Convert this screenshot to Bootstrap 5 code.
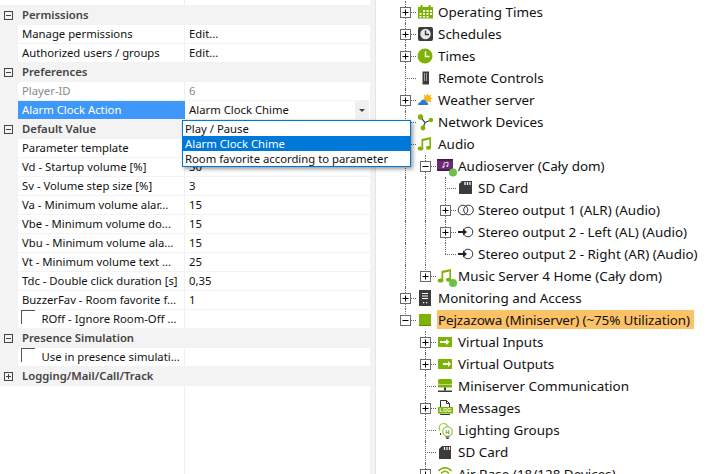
<!DOCTYPE html>
<html lang="en">
<head>
<meta charset="utf-8">
<title>Config</title>
<link rel="stylesheet" href="https://cdn.jsdelivr.net/npm/bootstrap@5.3.0/dist/css/bootstrap.min.css">
<style>
html,body{height:100%;}
body{background:#fff;overflow:hidden;font-family:"Noto Sans","Open Sans",sans-serif;color:#111;}
.shell{width:724px;height:474px;overflow:hidden;}
.prop-pane{width:370px;font-size:11.3px;line-height:18px;}
.split-bar{width:6px;background:#f3f3f3;border-right:1px solid #e4e4e4;}
.tree-pane{padding-top:1px;padding-left:19px;font-size:13.45px;line-height:22px;color:#111;overflow:hidden;}
.pg-top{height:5px;margin-left:18px;}
.pg-row{height:19px;border-bottom:1px solid #f3f3f3;background:#fff;}
.pg-last{height:18px;border-bottom:0;}
.pg-gut{width:18px;background:#f3f3f3;flex:none;}
.pg-name{width:167px;flex:none;padding-left:4px;border-right:1px solid #f0f0f0;white-space:nowrap;overflow:hidden;}
.pg-val{padding-left:4px;white-space:nowrap;}
.pg-band{height:20px;background:#f3f3f3;color:#444;font-weight:600;line-height:20px;padding-left:4px;}
.pg-band svg{width:9px;height:9px;margin-right:9px;flex:none;}
.pg-off{color:#8a8a8a;}
.pg-sel .pg-name{background:#3f97f9;color:#fff;border-right-color:#3f97f9;}
.pg-fill{margin-left:184px;border-left:1px solid #f0f0f0;}
.pg-fill-top{height:5px;}
.cb-box{width:14px;height:14px;margin:0 7px 0 2.5px;border-top:1px solid #555;border-left:1px solid #555;flex:none;}
.pg-name-cb{padding-left:0;}
.drop-btn{width:14px;height:18px;background:#f0f0f0;margin-left:auto;margin-right:1px;}
.drop-tri{width:0;height:0;border-left:3px solid transparent;border-right:3px solid transparent;border-top:3px solid #444;}
.combo-list{left:182px;top:120px;width:229px;min-width:0;padding:0;margin:0;border:1px solid #0078d7;border-radius:0;font-size:11.3px;box-shadow:2px 2px 4px rgba(0,0,0,.4);}
.combo-item{padding:0 0 0 2px;height:15px;line-height:15px;color:#111;font-size:11.3px;}
.combo-item.active{background:#0078d7;color:#fff;}
.tr-row{height:22px;white-space:nowrap;}
.tc{width:20px;height:22px;flex:none;position:relative;}
.tc-v::before,.tc-t::before{content:"";position:absolute;left:10px;top:0;bottom:0;border-left:1px dotted #666;}
.tc-l::before{content:"";position:absolute;left:10px;top:0;height:11px;border-left:1px dotted #666;}
.tc-t::after,.tc-l::after{content:"";position:absolute;left:10px;width:11px;top:11px;border-top:1px dotted #666;}
.exp{position:absolute;left:5px;top:6px;width:11px;height:11px;z-index:1;background:#fff;}
.ico-box{width:23px;height:22px;flex:none;position:relative;}
.ico{position:absolute;left:2px;top:1px;width:20px;height:20px;overflow:visible;z-index:2;}
.tr-hi{background:#fdc168;margin-left:-1px;padding-left:1px;padding-right:4px;height:19px;line-height:20px;margin-top:1px;letter-spacing:-.12px;}
.g{fill:#7cb305;}
.d{fill:#3c3c3c;}
</style>
</head>
<body>
<svg class="d-none" aria-hidden="true">
 <symbol id="p-plus" viewBox="0 0 11 11"><rect x=".5" y=".5" width="10" height="10" fill="#fff" stroke="#6a6a6a"/><path d="M2.5 5.5h6M5.5 2.5v6" stroke="#000" fill="none"/></symbol>
 <symbol id="p-minus" viewBox="0 0 11 11"><rect x=".5" y=".5" width="10" height="10" fill="#fff" stroke="#6a6a6a"/><path d="M2.5 5.5h6" stroke="#000" fill="none"/></symbol>
 <symbol id="b-plus" viewBox="0 0 9 9"><rect x=".5" y=".5" width="8" height="8" fill="none" stroke="#444"/><path d="M2 4.5h5M4.5 2v5" stroke="#444" fill="none"/></symbol>
 <symbol id="b-minus" viewBox="0 0 9 9"><rect x=".5" y=".5" width="8" height="8" fill="none" stroke="#444"/><path d="M2 4.5h5" stroke="#444" fill="none"/></symbol>
 <symbol id="i-note" viewBox="0 0 20 20"><path class="g" d="M4.500 5 14 3v10.500h-1.600V5.600L6.200 6.900V14.500H4.500z"/><ellipse class="g" cx="3.500" cy="14.500" rx="2.800" ry="2"/><ellipse class="g" cx="11.500" cy="13.800" rx="2.600" ry="2"/></symbol>
 <symbol id="i-sd" viewBox="0 0 20 20"><path class="d" d="M5 3h10v13H2V6z"/><path d="M8 4v3M10.500 4v3M13 4v3" stroke="#fff" stroke-width="1.300"/></symbol>
 <symbol id="i-out" viewBox="0 0 20 20"><circle cx="11" cy="10" r="4.800" fill="#fff" stroke="#333"/><path d="M1 10h6" stroke="#222" stroke-width="2"/><path d="M6 6.500 10 10l-4 3.500z" fill="#222"/></symbol>
 <symbol id="i-tag" viewBox="0 0 20 20"><rect class="g" x="1" y="5" width="14" height="10"/></symbol>
</svg>

<div class="shell d-flex">
 <div class="prop-pane position-relative d-flex flex-column flex-none">
  <div class="pg-top d-flex"><div class="pg-fill-top pg-name"></div></div>
  <div class="pg-band d-flex align-items-center"><svg><use href="#b-minus"/></svg>Permissions</div>
  <div class="pg-row d-flex"><div class="pg-gut"></div><div class="pg-name">Manage permissions</div><div class="pg-val">Edit...</div></div>
  <div class="pg-row pg-last d-flex"><div class="pg-gut"></div><div class="pg-name">Authorized users / groups</div><div class="pg-val">Edit...</div></div>
  <div class="pg-band d-flex align-items-center"><svg><use href="#b-minus"/></svg>Preferences</div>
  <div class="pg-row d-flex pg-off"><div class="pg-gut"></div><div class="pg-name">Player-ID</div><div class="pg-val">6</div></div>
  <div class="pg-row pg-last d-flex pg-sel"><div class="pg-gut"></div><div class="pg-name">Alarm Clock Action</div><div class="pg-val">Alarm Clock Chime</div><div class="drop-btn d-flex align-items-center justify-content-center"><div class="drop-tri"></div></div></div>
  <div class="pg-band d-flex align-items-center"><svg><use href="#b-minus"/></svg>Default Value</div>
  <div class="pg-row d-flex"><div class="pg-gut"></div><div class="pg-name">Parameter template</div><div class="pg-val"></div></div>
  <div class="pg-row d-flex"><div class="pg-gut"></div><div class="pg-name">Vd - Startup volume [%]</div><div class="pg-val">30</div></div>
  <div class="pg-row d-flex"><div class="pg-gut"></div><div class="pg-name">Sv - Volume step size [%]</div><div class="pg-val">3</div></div>
  <div class="pg-row d-flex"><div class="pg-gut"></div><div class="pg-name">Va - Minimum volume alar...</div><div class="pg-val">15</div></div>
  <div class="pg-row d-flex"><div class="pg-gut"></div><div class="pg-name">Vbe - Minimum volume do...</div><div class="pg-val">15</div></div>
  <div class="pg-row d-flex"><div class="pg-gut"></div><div class="pg-name">Vbu - Minimum volume ala...</div><div class="pg-val">15</div></div>
  <div class="pg-row d-flex"><div class="pg-gut"></div><div class="pg-name">Vt - Minimum volume text ...</div><div class="pg-val">25</div></div>
  <div class="pg-row d-flex"><div class="pg-gut"></div><div class="pg-name">Tdc - Double click duration [s]</div><div class="pg-val">0,35</div></div>
  <div class="pg-row d-flex"><div class="pg-gut"></div><div class="pg-name">BuzzerFav - Room favorite f...</div><div class="pg-val">1</div></div>
  <div class="pg-row pg-last d-flex"><div class="pg-gut"></div><div class="pg-name pg-name-cb d-flex"><span class="cb-box"></span>ROff - Ignore Room-Off ...</div><div class="pg-val"></div></div>
  <div class="pg-band d-flex align-items-center"><svg><use href="#b-minus"/></svg>Presence Simulation</div>
  <div class="pg-row pg-last d-flex"><div class="pg-gut"></div><div class="pg-name pg-name-cb d-flex"><span class="cb-box"></span>Use in presence simulati...</div><div class="pg-val"></div></div>
  <div class="pg-band d-flex align-items-center"><svg><use href="#b-plus"/></svg>Logging/Mail/Call/Track</div>
  <div class="pg-fill flex-grow-1"></div>

  <ul class="dropdown-menu show combo-list position-absolute list-unstyled">
   <li class="dropdown-item combo-item">Play / Pause</li>
   <li class="dropdown-item combo-item active">Alarm Clock Chime</li>
   <li class="dropdown-item combo-item">Room favorite according to parameter</li>
  </ul>
 </div>
 <div class="split-bar flex-none"></div>
 <div class="tree-pane flex-grow-1 d-flex flex-column">

  <div class="tr-row d-flex"><div class="tc tc-t"><svg class="exp"><use href="#p-plus"/></svg></div><div class="ico-box"><svg class="ico" viewBox="0 0 20 20"><rect class="g" x="1" y="5" width="15" height="11.500"/><rect class="g" x="3.500" y="3" width="2" height="3"/><rect class="g" x="11.500" y="3" width="2" height="3"/><path d="M6 8h2v2H6zM9.500 8h2v2h-2zM13 8h2v2h-2zM2.500 11h2v2h-2zM6 11h2v2H6zM9.500 11h2v2h-2zM13 11h2v2h-2zM2.500 14h2v1.500h-2zM6 14h2v1.500H6zM9.500 14h2v1.500h-2z" fill="#fff"/></svg></div><span>Operating Times</span></div>

  <div class="tr-row d-flex"><div class="tc tc-t"><svg class="exp"><use href="#p-plus"/></svg></div><div class="ico-box"><svg class="ico" viewBox="0 0 20 20"><rect class="d" x="1" y="3" width="15" height="14" rx="2"/><circle cx="8.500" cy="10" r="5.200" fill="#e8e8e8"/><path d="M8.500 6.500V10.500H12" stroke="#333" stroke-width="1.300" fill="none"/></svg></div><span>Schedules</span></div>

  <div class="tr-row d-flex"><div class="tc tc-t"><svg class="exp"><use href="#p-plus"/></svg></div><div class="ico-box"><svg class="ico" viewBox="0 0 20 20"><circle class="g" cx="8" cy="10" r="7.500"/><path d="M8.500 5.500V10.500H12.500" stroke="#fff" stroke-width="1.500" fill="none"/></svg></div><span>Times</span></div>

  <div class="tr-row d-flex"><div class="tc tc-t"></div><div class="ico-box"><svg class="ico" viewBox="0 0 20 20"><rect class="d" x="5.500" y="3.500" width="6.500" height="13"/><path d="M7 5.500h1v1H7zM9 5.500h1v1H9zM7 7.500h1v1H7zM9 7.500h1v1H9zM7 9.500h1v1H7zM9 9.500h1v1H9zM7 11.500h1v1H7zM9 11.500h1v1H9z" fill="#fff"/></svg></div><span>Remote Controls</span></div>

  <div class="tr-row d-flex"><div class="tc tc-t"><svg class="exp"><use href="#p-plus"/></svg></div><div class="ico-box"><svg class="ico" viewBox="0 0 20 20"><circle cx="10.500" cy="8.500" r="3.500" fill="#f6b91d"/><path d="M10.500 3.500v1.500M15.500 8.500H14M14 5l-1 1M7 5l1 1M14 12l-1-1" stroke="#f6b91d" stroke-width="1.100"/><path d="M1 15c0-2 1.300-3 2.500-3 .5-1.800 1.800-2.800 3.300-2.500 1.500.3 2.200 1.500 2.400 2.500 1 0 2 .8 2 3z" fill="#2d7cc7"/></svg></div><span>Weather server</span></div>

  <div class="tr-row d-flex"><div class="tc tc-t"></div><div class="ico-box"><svg class="ico" viewBox="0 0 20 20"><path d="M3.500 5 8 10.500l-2 5.500M14 8l-6 2.500" stroke="#444" stroke-width="1.200" fill="none"/><circle class="g" cx="3.500" cy="5" r="2.700"/><circle class="g" cx="14" cy="8" r="2.200"/><circle class="g" cx="6" cy="16" r="2.400"/></svg></div><span>Network Devices</span></div>

  <div class="tr-row d-flex"><div class="tc tc-t"></div><div class="ico-box"><svg class="ico"><use href="#i-note"/></svg></div><span>Audio</span></div>

  <div class="tr-row d-flex"><div class="tc tc-v"></div><div class="tc tc-t"><svg class="exp"><use href="#p-minus"/></svg></div><div class="ico-box"><svg class="ico" viewBox="0 0 20 20"><rect x="0" y="3" width="16" height="12" fill="#6b2b72"/><rect x="0" y="3" width="16" height="1.500" fill="#3f1644"/><rect x="0" y="13.500" width="16" height="1.500" fill="#3f1644"/><path d="M7 11V7l4-.8V10" stroke="#e8d8ea" fill="none"/><circle cx="6.200" cy="11" r="1" fill="#e8d8ea"/><circle cx="10.200" cy="10" r="1" fill="#e8d8ea"/><circle cx="16" cy="16.500" r="4" fill="#6cc04a"/></svg></div><span>Audioserver (Cały dom)</span></div>

  <div class="tr-row d-flex"><div class="tc tc-v"></div><div class="tc tc-v"></div><div class="tc tc-t"></div><div class="ico-box"><svg class="ico"><use href="#i-sd"/></svg></div><span>SD Card</span></div>

  <div class="tr-row d-flex"><div class="tc tc-v"></div><div class="tc tc-v"></div><div class="tc tc-t"><svg class="exp"><use href="#p-plus"/></svg></div><div class="ico-box"><svg class="ico" viewBox="0 0 20 20"><circle cx="6" cy="10" r="4.800" fill="none" stroke="#333"/><circle cx="11.500" cy="10" r="4.800" fill="none" stroke="#333"/></svg></div><span>Stereo output 1 (ALR) (Audio)</span></div>

  <div class="tr-row d-flex"><div class="tc tc-v"></div><div class="tc tc-v"></div><div class="tc tc-t"><svg class="exp"><use href="#p-plus"/></svg></div><div class="ico-box"><svg class="ico"><use href="#i-out"/></svg></div><span>Stereo output 2 - Left (AL) (Audio)</span></div>

  <div class="tr-row d-flex"><div class="tc tc-v"></div><div class="tc tc-v"></div><div class="tc tc-l"></div><div class="ico-box"><svg class="ico"><use href="#i-out"/></svg></div><span>Stereo output 2 - Right (AR) (Audio)</span></div>

  <div class="tr-row d-flex"><div class="tc tc-v"></div><div class="tc tc-l"><svg class="exp"><use href="#p-plus"/></svg></div><div class="ico-box"><svg class="ico" viewBox="0 0 20 20"><use href="#i-note"/><circle cx="16" cy="17" r="4" fill="#6cc04a"/></svg></div><span>Music Server 4 Home (Cały dom)</span></div>

  <div class="tr-row d-flex"><div class="tc tc-t"><svg class="exp"><use href="#p-plus"/></svg></div><div class="ico-box"><svg class="ico" viewBox="0 0 20 20"><rect class="d" x="2" y="2" width="12" height="16"/><path d="M5 5.500h6M5 8h6M5 10.500h6" stroke="#fff"/><path d="M6 14h1.200v1.200H6zM9 14h1.200v1.200H9z" fill="#fff"/></svg></div><span>Monitoring and Access</span></div>

  <div class="tr-row d-flex"><div class="tc tc-l"><svg class="exp"><use href="#p-minus"/></svg></div><div class="ico-box"><svg class="ico" viewBox="0 0 20 20"><rect class="g" x="2" y="4" width="12" height="12"/><rect x="2" y="15" width="12" height="1" fill="#5c8a00"/></svg></div><span class="tr-hi">Pejzazowa (Miniserver) (~75% Utilization)</span></div>

  <div class="tr-row d-flex"><div class="tc"></div><div class="tc tc-t"><svg class="exp"><use href="#p-plus"/></svg></div><div class="ico-box"><svg class="ico" viewBox="0 0 20 20"><use href="#i-tag"/><path d="M3 9h6V7l3.500 3L9 13v-2H3z" fill="#fff"/></svg></div><span>Virtual Inputs</span></div>

  <div class="tr-row d-flex"><div class="tc"></div><div class="tc tc-t"><svg class="exp"><use href="#p-plus"/></svg></div><div class="ico-box"><svg class="ico" viewBox="0 0 20 20"><use href="#i-tag"/><path d="M6 9h5V7l3 3-3 3v-2H6z" fill="#fff"/></svg></div><span>Virtual Outputs</span></div>

  <div class="tr-row d-flex"><div class="tc"></div><div class="tc tc-t"></div><div class="ico-box"><svg class="ico" viewBox="0 0 20 20"><rect class="g" x="1" y="3" width="14" height="5" rx="1.500"/><rect class="g" x="1" y="8.500" width="14" height="3"/><path d="M8 11.500v3" stroke="#333" stroke-width="2"/><rect class="d" x="1" y="14.500" width="14" height="1.500"/></svg></div><span>Miniserver Communication</span></div>

  <div class="tr-row d-flex"><div class="tc"></div><div class="tc tc-t"><svg class="exp"><use href="#p-plus"/></svg></div><div class="ico-box"><svg class="ico" viewBox="0 0 20 20"><path d="M3.500 9V2.500h6l3 3V9M3.500 15.500v1h9v-1" fill="#fff" stroke="#333"/><path d="M9.500 2.500v3h3" fill="none" stroke="#333"/><rect class="g" x="1" y="9" width="15" height="6.500"/><text x="8.500" y="14.300" text-anchor="middle" font-size="5.500" font-weight="700" font-family="Liberation Sans,sans-serif" fill="#fff">LOG</text></svg></div><span>Messages</span></div>

  <div class="tr-row d-flex"><div class="tc"></div><div class="tc tc-t"></div><div class="ico-box"><svg class="ico" viewBox="0 0 20 20"><path d="M3 11C1 7 3 3.500 6.500 3.500c2 0 3.500 1 4 2.500" fill="none" stroke="#9ccb52" stroke-width="1.200"/><circle cx="10.500" cy="11.500" r="4.800" fill="#fff" stroke="#9ccb52" stroke-width="1.300"/><text x="10.500" y="13.500" text-anchor="middle" font-size="5.500" font-weight="700" font-family="Liberation Sans,sans-serif" fill="#5c8a00">H</text><path d="M8.500 17h4M9.300 18.500h2.400M3.500 13v2" stroke="#333"/></svg></div><span>Lighting Groups</span></div>

  <div class="tr-row d-flex"><div class="tc"></div><div class="tc tc-t"></div><div class="ico-box"><svg class="ico" viewBox="0 0 20 20"><path class="d" d="M5 4h9v13H2V7z"/><path d="M7.500 5v3M10 5v3M12.500 5v3" stroke="#fff" stroke-width="1.200"/></svg></div><span>SD Card</span></div>

  <div class="tr-row d-flex"><div class="tc"></div><div class="tc tc-t"><svg class="exp"><use href="#p-plus"/></svg></div><div class="ico-box"><svg class="ico" viewBox="0 0 20 20"><path d="M1.500 7C5 2.500 11 2.500 14.500 7M4 9.500c2.500-3 5.500-3 8 0M6.500 12c1-1.200 2-1.200 3 0" fill="none" stroke="#7cb305" stroke-width="1.500"/></svg></div><span>Air Base (18/128 Devices)</span></div>

 </div>
</div>
<script src="https://cdn.jsdelivr.net/npm/bootstrap@5.3.0/dist/js/bootstrap.bundle.min.js"></script>
</body>
</html>
